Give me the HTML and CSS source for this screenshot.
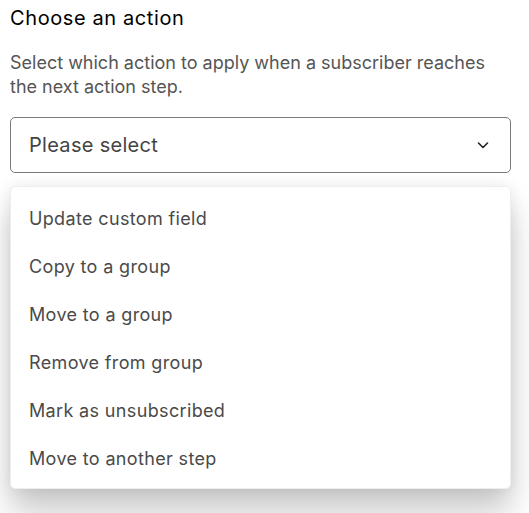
FILE: index.html
```html
<!DOCTYPE html>
<html>
<head>
<meta charset="utf-8">
<link rel="stylesheet" href="styles.css">
</head>
<body>
<div class="panel">
  <h2 class="title">Choose an action</h2>
  <p class="desc">Select which action to apply when a subscriber reaches the next action step.</p>
  <div class="select">
    <span class="placeholder">Please select</span>
    <svg class="chev" width="14" height="14" viewBox="0 0 14 14"><path d="M2.5 5 L7 9.5 L11.5 5" fill="none" stroke="#222" stroke-width="1.6" stroke-linecap="round" stroke-linejoin="round"/></svg>
  </div>
  <ul class="menu">
    <li class="item">Update custom field</li>
    <li class="item">Copy to a group</li>
    <li class="item">Move to a group</li>
    <li class="item">Remove from group</li>
    <li class="item">Mark as unsubscribed</li>
    <li class="item">Move to another step</li>
  </ul>
</div>
</body>
</html>
```
FILE: styles.css
```css
html, body { margin: 0; padding: 0; background: #fff; }
body { font-family: Inter, "Noto Sans", sans-serif; }
.panel { width: 501px; padding: 0 0 40px 10px; }
.title { margin: 0; padding-top: 6px; font-size: 20px; line-height: 24px; font-weight: 400; letter-spacing: 0.6px; color: #000; }
.desc { margin: 21px 0 0; font-size: 18px; line-height: 24px; color: #555; }
.select {
  margin-top: 18px;
  height: 54px;
  border: 1px solid #7a7a7a;
  border-radius: 5px;
  display: flex; align-items: center; justify-content: space-between;
  padding: 0 20px 0 18px;
}
.placeholder { font-size: 20px; letter-spacing: 0.3px; color: #444; }
.chev { display: block; }
.menu {
  list-style: none; margin: 13px 0 0; padding: 7px 0 6px;
  border: 1px solid #eeeeee; border-radius: 5px; background: #fff;
  box-shadow: 0 22px 32px rgba(0,0,0,0.22), 0 0 14px rgba(0,0,0,0.07);
}
.item { height: 48px; display: flex; align-items: center; padding-left: 18px; font-size: 18px; color: #4a4a4a; letter-spacing: 0.35px; }
```
